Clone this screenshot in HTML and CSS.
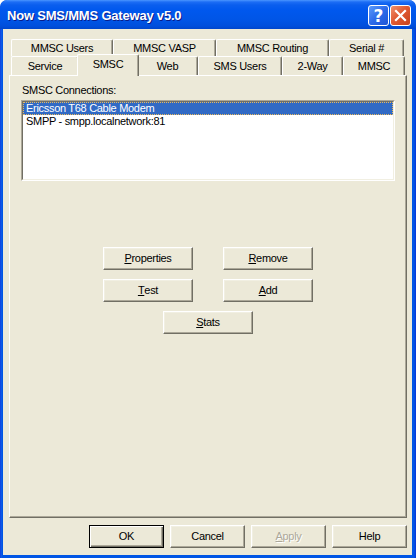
FILE: index.html
```html
<!DOCTYPE html>
<html>
<head>
<meta charset="utf-8">
<link rel="stylesheet" href="styles.css">
</head>
<body>
<div class="window">
  <div class="titlebar">
    <span class="title">Now SMS/MMS Gateway v5.0</span>
    <div class="caption-btns">
      <span class="cbtn help">?</span>
      <span class="cbtn close"><svg width="13" height="13" viewBox="0 0 13 13"><path d="M2 2 L11 11 M11 2 L2 11" stroke="#fff" stroke-width="2.2" stroke-linecap="square"/></svg></span>
    </div>
  </div>
  <div class="frame">
    <div class="client">
      <div class="tabs">
        <div class="tabrow back">
          <div class="tab w-mu">MMSC Users</div>
          <div class="tab w-mv">MMSC VASP</div>
          <div class="tab w-mr">MMSC Routing</div>
          <div class="tab w-sn">Serial #</div>
        </div>
        <div class="tabrow front">
          <div class="tab w-sv">Service</div>
          <div class="tab w-sm selected">SMSC</div>
          <div class="tab w-wb">Web</div>
          <div class="tab w-su">SMS Users</div>
          <div class="tab w-2w">2-Way</div>
          <div class="tab w-mm">MMSC</div>
        </div>
      </div>
      <div class="panel">
        <div class="label">SMSC Connections:</div>
        <div class="listbox">
          <div class="listbox-inner">
            <div class="item sel">Ericsson T68 Cable Modem</div>
            <div class="item">SMPP - smpp.localnetwork:81</div>
          </div>
        </div>
        <div class="actions">
          <div class="action-row">
            <div class="btn wide"><u>P</u>roperties</div>
            <div class="btn wide"><u>R</u>emove</div>
          </div>
          <div class="action-row">
            <div class="btn wide"><u>T</u>est</div>
            <div class="btn wide"><u>A</u>dd</div>
          </div>
          <div class="action-row">
            <div class="btn wide"><u>S</u>tats</div>
          </div>
        </div>
      </div>
      <div class="footer">
        <div class="btn default">OK</div>
        <div class="btn">Cancel</div>
        <div class="btn disabled"><u>A</u>pply</div>
        <div class="btn">Help</div>
      </div>
    </div>
  </div>
</div>
</body>
</html>
```
FILE: styles.css
```css
* { box-sizing: border-box; }
html, body { margin: 0; padding: 0; background: #ffffff; }
body {
  font-family: "Liberation Sans", Arial, sans-serif;
  font-size: 11px;
  letter-spacing: -0.3px;
  color: #000;
}
.window {
  width: 416px;
  height: 558px;
  display: flex;
  flex-direction: column;
  border-radius: 7px 7px 0 0;
  overflow: hidden;
  background: #0054E3;
}
.titlebar {
  height: 29px;
  flex: none;
  display: flex;
  align-items: center;
  padding: 2px 5px 0 7px;
  background: linear-gradient(#4A96FF 0px, #1C6DF5 2px, #0A5EEE 5px, #0058EE 10px, #0055E6 20px, #004FDC 26px, #0046CC 29px);
  border-radius: 7px 7px 0 0;
}
.title {
  color: #fff;
  font-weight: bold;
  font-size: 13px;
  letter-spacing: -0.2px;
  text-shadow: 1px 1px #0A1C8A;
}
.caption-btns {
  margin-left: auto;
  display: flex;
  gap: 1px;
}
.cbtn {
  width: 21px;
  height: 21px;
  border: 1px solid #fff;
  border-radius: 3px;
  display: flex;
  align-items: center;
  justify-content: center;
  color: #fff;
}
.help {
  background: linear-gradient(135deg, #5C9BFA 0%, #2E6BEA 50%, #1E55D6 100%);
  font-weight: bold;
  font-size: 17px;
  letter-spacing: 0;
  font-family: "DejaVu Sans", sans-serif;
}
.close {
  background: linear-gradient(135deg, #F0916E 0%, #E05A33 45%, #C8421B 100%);
}
.frame {
  flex: 1;
  display: flex;
  padding: 0 4px 3px 3px;
  background: linear-gradient(to right, #0831D9 0, #1A5FE8 1px, #0055E5 2px, #0055E5 calc(100% - 2px), #0831D9 100%);
}
.client {
  flex: 1;
  background: #ECE9D8;
  display: flex;
  flex-direction: column;
  padding: 10px 5px 7px 6px;
}
.tabs {
  padding-left: 2px;
  display: flex;
  flex-direction: column;
}
.tabrow { display: flex; }
.tabrow.back { height: 17px; }
.tabrow.front { height: 19px; align-items: flex-start; }
.tab {
  background: #ECE9D8;
  border-top: 1px solid #fff;
  border-left: 1px solid #fff;
  border-right: 1px solid #716F64;
  box-shadow: inset -1px 0 #ACA899;
  border-radius: 2px 2px 0 0;
  display: flex;
  align-items: center;
  justify-content: center;
  padding-bottom: 1px;
}
.back .tab { height: 17px; padding-top: 1px; }
.front .tab { height: 19px; padding-top: 1px; }
.front .tab.selected {
  position: relative;
  z-index: 2;
  height: 22px;
  margin: -2px -2px -1px -2px;
  padding-top: 0;
  padding-bottom: 4px;
}
.w-mu { width: 102px; }
.w-mv { width: 103px; }
.w-mr { width: 113px; }
.w-sn { width: 75px; }
.w-sv { width: 68px; }
.w-sm { width: 62px; }
.w-wb { width: 61px; }
.w-su { width: 84px; }
.w-2w { width: 61px; }
.w-mm { width: 62px; }
.panel {
  height: 443px;
  flex: none;
  border-top: 1px solid #fff;
  border-left: 1px solid #fff;
  border-right: 1px solid #716F64;
  border-bottom: 1px solid #716F64;
  box-shadow: inset -1px -1px #ACA899;
  padding: 8px 11px 0 11px;
  display: flex;
  flex-direction: column;
}
.label {
  line-height: 13px;
  height: 13px;
  margin-bottom: 3px;
  margin-left: 1px;
}
.listbox {
  height: 81px;
  border: 1px solid;
  border-color: #ACA899 #fff #fff #ACA899;
}
.listbox-inner {
  height: 100%;
  border: 1px solid;
  border-color: #716F64 #F1EFE2 #F1EFE2 #716F64;
  background: #fff;
}
.item {
  height: 13px;
  line-height: 11px;
  padding: 0 2px;
  border: 1px solid transparent;
  white-space: nowrap;
}
.item.sel {
  background: #316AC5;
  color: #fff;
  border: 1px dotted #E9B85C;
}
.actions {
  margin-top: 66px;
  display: flex;
  flex-direction: column;
  gap: 9px;
}
.action-row {
  display: flex;
  justify-content: center;
  gap: 30px;
}
.btn {
  width: 75px;
  height: 23px;
  background: #ECE9D8;
  border: 1px solid;
  border-color: #fff #716F64 #716F64 #fff;
  box-shadow: inset -1px -1px #ACA899, inset 1px 1px #F1EFE2;
  display: flex;
  align-items: center;
  justify-content: center;
  padding-bottom: 1px;
}
.btn.wide { width: 90px; }
.btn.default {
  border: 1px solid #000;
  box-shadow: inset 1px 1px #fff, inset -1px -1px #716F64, inset -2px -2px #ACA899;
}
.btn.disabled {
  color: #ACA899;
  text-shadow: 1px 1px #fff;
}
.footer {
  margin-top: 7px;
  display: flex;
  justify-content: flex-end;
  gap: 6px;
}
u { text-decoration: underline; text-underline-offset: 1px; }
```
